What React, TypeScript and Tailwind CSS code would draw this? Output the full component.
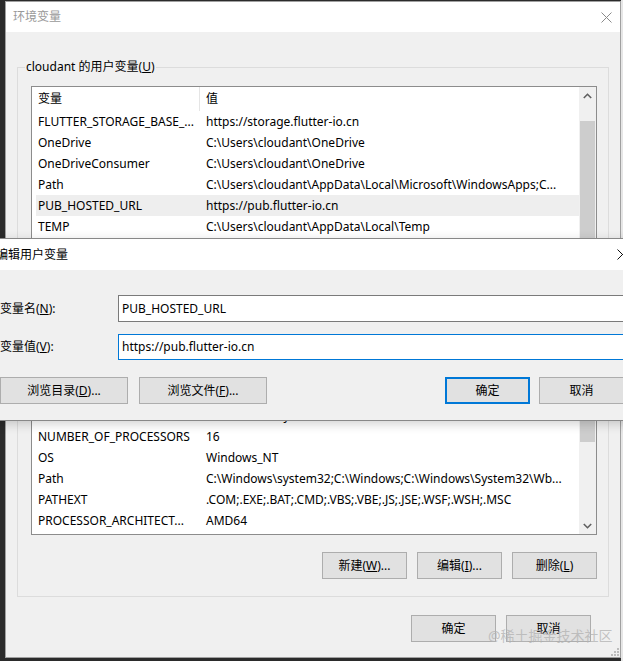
const rows: [string, string][] = [
  ['FLUTTER_STORAGE_BASE_...', 'https://storage.flutter-io.cn'],
  ['OneDrive', 'C:\\Users\\cloudant\\OneDrive'],
  ['OneDriveConsumer', 'C:\\Users\\cloudant\\OneDrive'],
  ['Path', 'C:\\Users\\cloudant\\AppData\\Local\\Microsoft\\WindowsApps;C...'],
  ['PUB_HOSTED_URL', 'https://pub.flutter-io.cn'],
  ['TEMP', 'C:\\Users\\cloudant\\AppData\\Local\\Temp'],
  ['TMP', 'C:\\Users\\cloudant\\AppData\\Local\\Temp'],
  ['ComSpec', 'C:\\Windows\\system32\\cmd.exe'],
  ['DART_HOME', 'C:\\tools\\dart-sdk'],
  ['FLUTTER_HOME', 'C:\\tools\\flutter'],
  ['JAVA_HOME', 'C:\\Program Files\\Java\\jdk1.8.0_281'],
  ['ANDROID_HOME', 'C:\\Android\\sdk'],
  ['CLASSPATH', '.;%JAVA_HOME%\\lib'],
  ['NODE_HOME', 'C:\\Program Files\\nodejs'],
  ['DriverData', 'C:\\Windows\\System32\\Drivers\\DriverData'],
  ['NUMBER_OF_PROCESSORS', '16'],
  ['OS', 'Windows_NT'],
  ['Path', 'C:\\Windows\\system32;C:\\Windows;C:\\Windows\\System32\\Wb...'],
  ['PATHEXT', '.COM;.EXE;.BAT;.CMD;.VBS;.VBE;.JS;.JSE;.WSF;.WSH;.MSC'],
  ['PROCESSOR_ARCHITECT...', 'AMD64'],
]

function CloseX({ color }: { color: string }) {
  return (
    <svg width="11" height="11" viewBox="0 0 11 11">
      <path d="M0.5 0.5 L10.5 10.5 M10.5 0.5 L0.5 10.5" stroke={color} strokeWidth="1" fill="none" />
    </svg>
  )
}

function Chevron({ up }: { up?: boolean }) {
  return (
    <svg width="9" height="6" viewBox="0 0 9 6">
      <path d={up ? 'M0.8 5 L4.5 1.3 L8.2 5' : 'M0.8 1 L4.5 4.7 L8.2 1'} stroke="#606060" strokeWidth="1.6" fill="none" />
    </svg>
  )
}

function Btn({ children, w = 'w-[85px]', primary }: { children: React.ReactNode; w?: string; primary?: boolean }) {
  return (
    <div
      className={`${w} h-[27px] flex items-center justify-center bg-[#e1e1e1] ${
        primary ? 'border-2 border-[#0078d7]' : 'border border-[#adadad]'
      }`}
    >
      {children}
    </div>
  )
}

export default function App() {
  return (
    <div className="relative w-[623px] h-[661px] overflow-hidden bg-[#2b2b2b] flex font-['Noto_Sans','Noto_Sans_CJK_SC',sans-serif] text-[12px] leading-[16px] text-black">
      <div className="w-[5px] shrink-0" />

      {/* 环境变量 */}
      <div className="relative w-[616px] h-[657px] mt-[1px] shrink-0 flex flex-col border border-[#a0a0a0]">
        <div className="h-[30px] bg-white flex items-center justify-between pl-[7px] pr-[8px]">
          <span className="text-[#999999]">环境变量</span>
          <CloseX color="#8a8a8a" />
        </div>

        <div className="flex-1 bg-[#f0f0f0] flex flex-col">
          <fieldset className="mt-[27px] mx-[11px] border border-[#dcdcdc] pb-[17px]">
            <legend className="ml-[7px] px-[1px]">
              cloudant 的用户变量(<span className="underline">U</span>)
            </legend>

            <div className="mt-[11px] ml-[13px] mr-[11px] h-[449px] border border-[#8c8c8c] bg-white flex">
              <div className="flex-1 flex flex-col overflow-hidden">
                <div className="h-[24px] flex items-center shrink-0">
                  <div className="w-[168px] h-full flex items-center pl-[6px] border-r border-[#e5e5e5]">变量</div>
                  <div className="pl-[6px]">值</div>
                </div>
                {rows.map(([name, value], i) => (
                  <div
                    key={i}
                    className={`h-[21px] shrink-0 ml-[4px] flex items-center whitespace-nowrap ${
                      i === 4 ? 'bg-[#eeeeee]' : ''
                    }`}
                  >
                    <div className="w-[168px] pl-[2px] overflow-hidden">{name}</div>
                    <div className="flex-1 pl-[2px] overflow-hidden">{value}</div>
                  </div>
                ))}
              </div>

              <div className="w-[17px] bg-[#f0f0f0] flex flex-col">
                <div className="h-[17px] flex items-center justify-center">
                  <Chevron up />
                </div>
                <div className="h-[17px]" />
                <div className="h-[321px] mx-[1px] bg-[#cdcdcd]" />
                <div className="flex-1" />
                <div className="h-[17px] flex items-center justify-center">
                  <Chevron />
                </div>
              </div>
            </div>

            <div className="mt-[17px] mr-[11px] flex justify-end gap-[10px]">
              <Btn>
                新建(<span className="underline">W</span>)...
              </Btn>
              <Btn>
                编辑(<span className="underline">I</span>)...
              </Btn>
              <Btn>
                删除(<span className="underline">L</span>)
              </Btn>
            </div>
          </fieldset>

          <div className="mt-[18px] pr-[29px] flex justify-end gap-[10px]">
            <Btn>确定</Btn>
            <Btn>取消</Btn>
          </div>
        </div>

        {/* size grip */}
        <svg className="absolute right-[1px] bottom-[1px]" width="9" height="9" viewBox="0 0 9 9">
          {[
            [7, 1],
            [4, 4],
            [7, 4],
            [1, 7],
            [4, 7],
            [7, 7],
          ].map(([x, y], i) => (
            <rect key={i} x={x} y={y} width="2" height="2" fill="#bcbcbc" />
          ))}
        </svg>
      </div>

      <div className="w-[2px] shrink-0 bg-[#e6e6e6]" />

      {/* 编辑用户变量 */}
      <div className="absolute left-[-12px] top-[238px] w-[658px] h-[183px] flex flex-col border border-[#888888] shadow-[0_3px_10px_rgba(0,0,0,0.18)]">
        <div className="h-[31px] bg-white flex items-center justify-between pl-[7px]">
          <span>编辑用户变量</span>
          <div className="w-[46px] flex justify-center">
            <CloseX color="#111111" />
          </div>
        </div>
        <div className="flex-1 bg-[#f0f0f0] px-[11px] pt-[25px]">
          <div className="flex items-center">
            <div className="w-[118px]">
              变量名(<span className="underline">N</span>):
            </div>
            <div className="flex-1 h-[27px] bg-white border border-[#7a7a7a] flex items-center pl-[3px]">PUB_HOSTED_URL</div>
          </div>
          <div className="mt-[12px] flex items-center">
            <div className="w-[118px]">
              变量值(<span className="underline">V</span>):
            </div>
            <div className="flex-1 h-[26px] bg-white border border-[#0078d7] flex items-center pl-[3px]">https://pub.flutter-io.cn</div>
          </div>
          <div className="mt-[17px] flex">
            <Btn w="w-[128px]">
              浏览目录(<span className="underline">D</span>)...
            </Btn>
            <div className="ml-[11px]">
              <Btn w="w-[128px]">
                浏览文件(<span className="underline">F</span>)...
              </Btn>
            </div>
            <div className="ml-auto">
              <Btn primary>确定</Btn>
            </div>
            <div className="ml-[9px] mr-[10px]">
              <Btn>取消</Btn>
            </div>
          </div>
        </div>
      </div>

      {/* watermark */}
      <div className="absolute left-[488px] top-[626px] text-[14px] leading-[20px] text-[#b4b4b4]/80">@稀土掘金技术社区</div>
    </div>
  )
}
